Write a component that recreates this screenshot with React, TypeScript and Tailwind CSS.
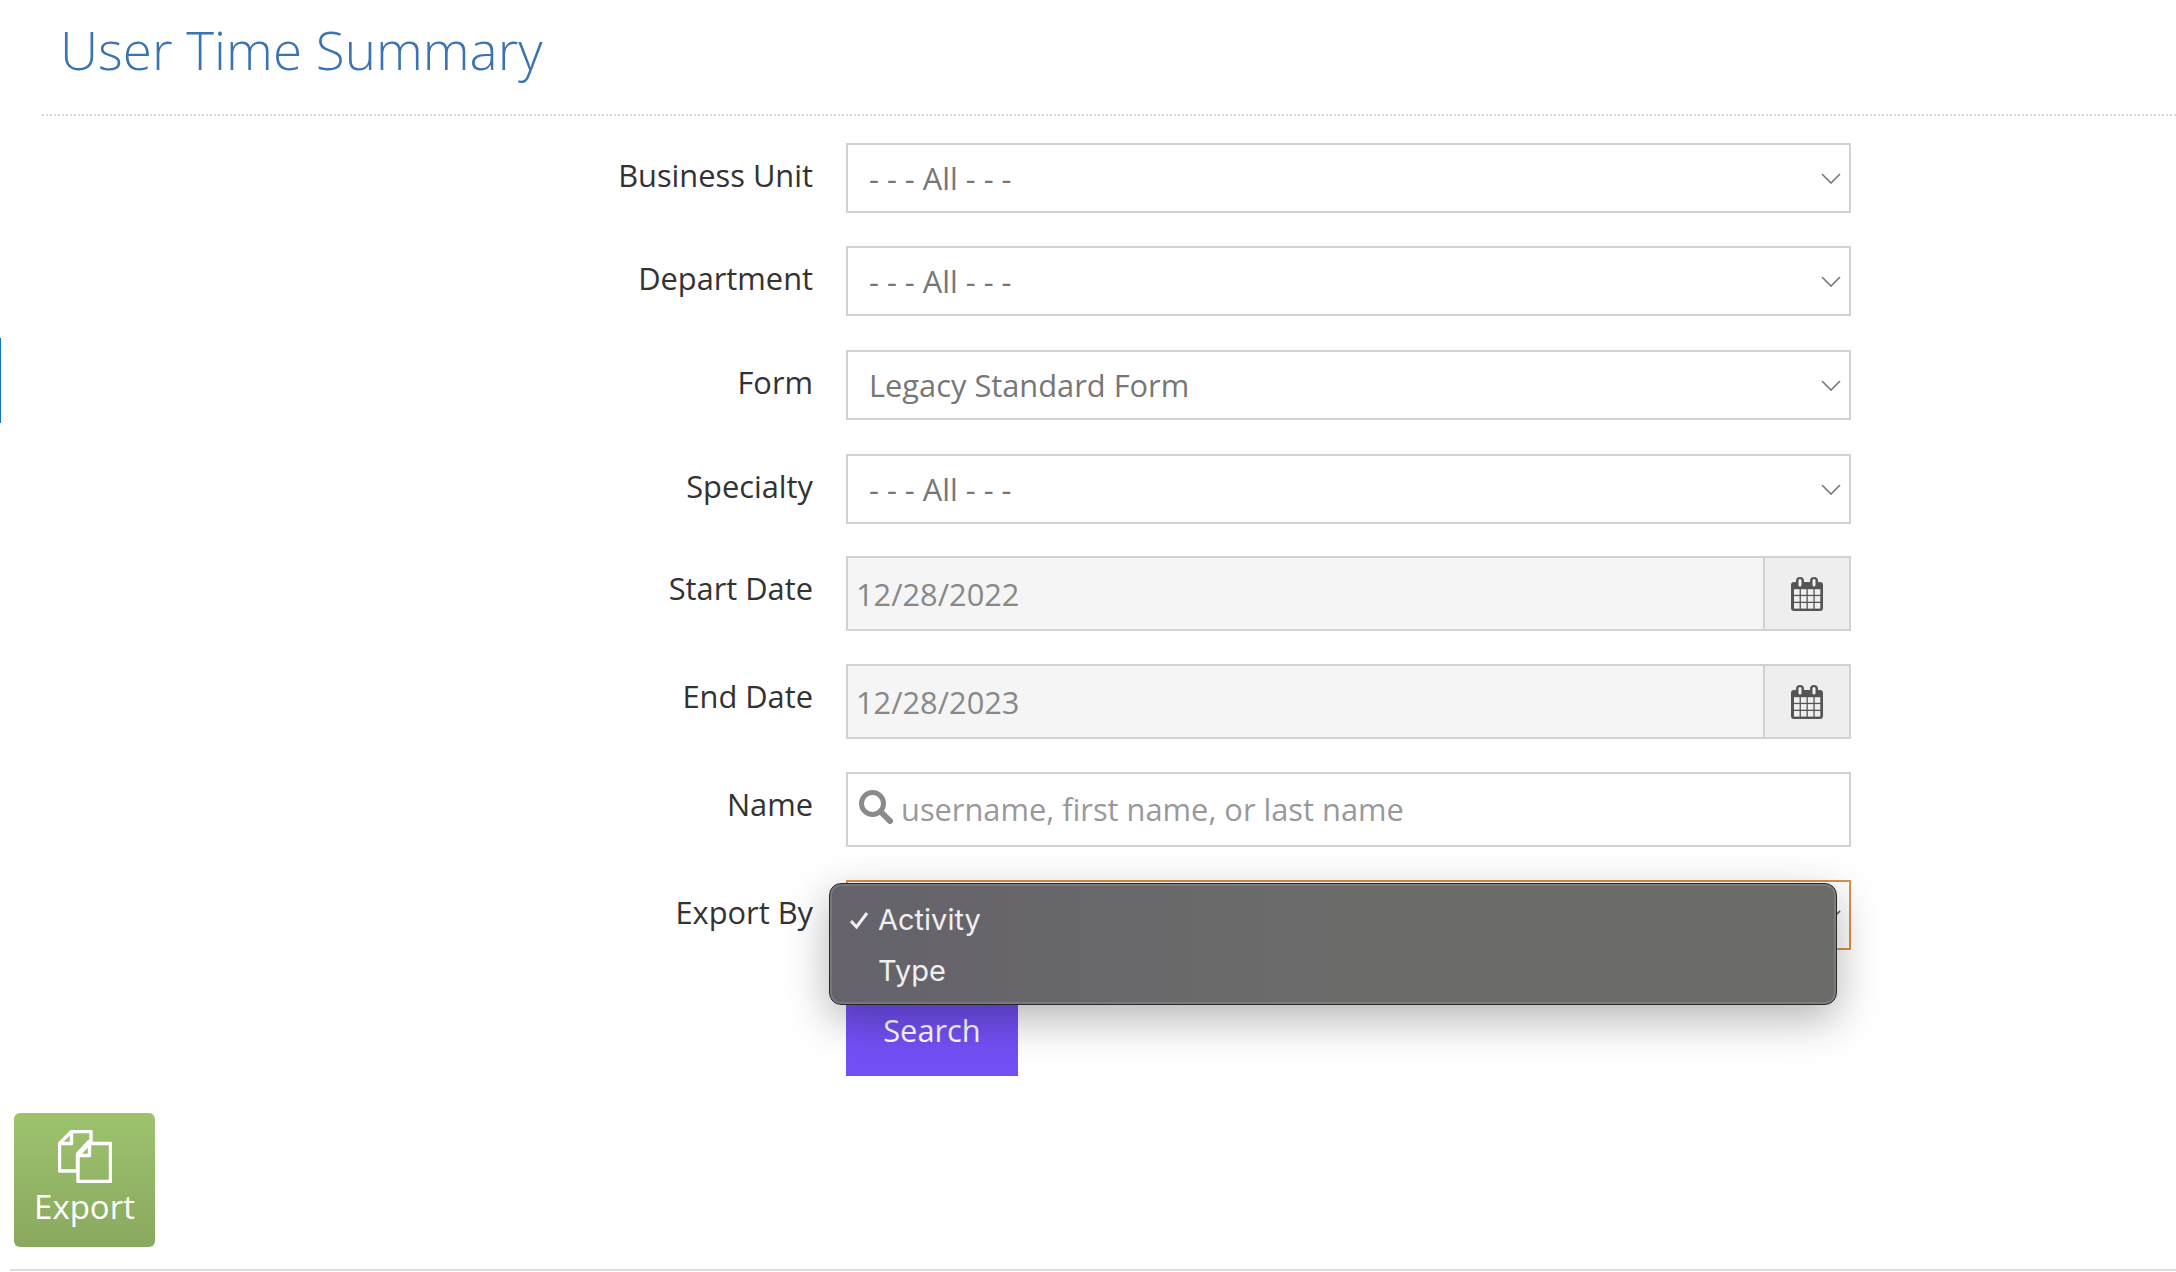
const sans = "font-['Open_Sans','Noto_Sans',sans-serif]";

function Chevron({ className = "text-[#777]" }: { className?: string }) {
  return (
    <svg width="20" height="11" viewBox="0 0 20 11" fill="none" className={"absolute right-[8px] top-[28px] " + className}>
      <path d="M1 1l9 9 9-9" stroke="currentColor" strokeWidth="1.6" />
    </svg>
  );
}

function CalendarIcon() {
  const cells = [];
  for (let r = 0; r < 3; r++) {
    for (let c = 0; c < 4; c++) {
      cells.push(<rect key={r + "-" + c} x={3 + c * 6.9} y={12.2 + r * 6.9} width="5.6" height="5.6" fill="#efefef" />);
    }
  }
  return (
    <svg width="32" height="34" viewBox="0 0 32 34">
      <rect x="0" y="5" width="32" height="29" rx="3" fill="#555" />
      <rect x="5" y="0" width="8" height="11" rx="4" fill="#555" />
      <rect x="19" y="0" width="8" height="11" rx="4" fill="#555" />
      <rect x="7.5" y="2" width="3" height="7.5" rx="1.5" fill="#f2f2f2" />
      <rect x="21.5" y="2" width="3" height="7.5" rx="1.5" fill="#f2f2f2" />
      {cells}
    </svg>
  );
}

function SelectRow({ label, value, mt }: { label: string; value: string; mt: string }) {
  return (
    <div className={"flex items-center " + mt}>
      <label className="w-[813px] pb-[6px] text-right text-[30.8px] leading-[40px] text-[#333]">{label}</label>
      <div className="relative ml-[33px] flex h-[70px] w-[1005px] items-center border-2 border-[#d2d2d2] bg-white pl-[21px] text-[30.8px] text-[#777]">
        {value}
        <Chevron />
      </div>
    </div>
  );
}

function DateRow({ label, value, mt }: { label: string; value: string; mt: string }) {
  return (
    <div className={"flex " + mt}>
      <label className="w-[813px] pt-[12px] text-right text-[30.8px] leading-[40px] text-[#333]">{label}</label>
      <div className="ml-[33px] flex h-[75px] w-[1005px] border-2 border-[#d2d2d2]">
        <div className="flex flex-1 items-center bg-[#f5f5f5] pl-[8px] pt-[2px] text-[30.8px] text-[#888]">{value}</div>
        <div className="flex w-[86px] items-center justify-center border-l-2 border-[#d2d2d2] bg-[#eeeeee]">
          <CalendarIcon />
        </div>
      </div>
    </div>
  );
}

export default function App() {
  return (
    <div className={"relative h-[1272px] w-[2176px] overflow-hidden bg-white " + sans}>
      <div className="absolute left-0 top-[338px] h-[85px] w-[1px] bg-[#1a73c8]" />
      <h1 className="pl-[60px] pt-[15px] text-[53px] font-light leading-[70px] text-[#3b74b0]">User Time Summary</h1>
      <div className="ml-[42px] mt-[29px] border-t-2 border-dotted border-[#d9d9d9]" />

      <div className="pt-[27px]">
        <SelectRow label="Business Unit" value="- - - All - - -" mt="" />
        <SelectRow label="Department" value="- - - All - - -" mt="mt-[33px]" />
        <SelectRow label="Form" value="Legacy Standard Form" mt="mt-[34px]" />
        <SelectRow label="Specialty" value="- - - All - - -" mt="mt-[34px]" />
        <DateRow label="Start Date" value="12/28/2022" mt="mt-[32px]" />
        <DateRow label="End Date" value="12/28/2023" mt="mt-[33px]" />

        <div className="mt-[33px] flex">
          <label className="w-[813px] pt-[12px] text-right text-[30.8px] leading-[40px] text-[#333]">Name</label>
          <div className="ml-[33px] flex h-[75px] w-[1005px] items-center border-2 border-[#d2d2d2] bg-white pl-[11px] text-[30.8px] text-[#999]">
            <svg width="34" height="34" viewBox="0 0 34 34" fill="none" className="mb-[6px] mr-[8px] shrink-0">
              <circle cx="13.5" cy="13.5" r="11" stroke="#8a8a8a" strokeWidth="5" />
              <path d="M21.5 21.5L31 31" stroke="#8a8a8a" strokeWidth="6" strokeLinecap="round" />
            </svg>
            username, first name, or last name
          </div>
        </div>

        <div className="relative mt-[33px] flex">
          <label className="w-[813px] pt-[12px] text-right text-[30.8px] leading-[40px] text-[#333]">Export By</label>
          <div className="relative ml-[33px] h-[70px] w-[1005px] border-2 border-[#dd9147] bg-white">
            <Chevron className="text-[#555]" />
          </div>
          <div className="absolute left-[829px] top-[3px] z-10 flex h-[122px] w-[1008px] flex-col rounded-[12px] border border-[#2a2a2a] bg-gradient-to-r from-[#65626b] from-0% via-[#6b6c6a] via-50% to-[#6b6c6a] pl-[19px] pt-[10px] font-['Inter',sans-serif] text-[29px] leading-[51px] text-[#f0f0f0] shadow-[inset_0_0_0_2px_rgba(255,255,255,0.12),0_14px_44px_rgba(0,0,0,0.3)]">
            <div className="flex items-center">
              <svg width="20" height="18" viewBox="0 0 20 18" fill="none" className="mr-[9px]">
                <path d="M2 10l5.5 6L18 2" stroke="#f0f0f0" strokeWidth="3" />
              </svg>
              Activity
            </div>
            <div className="pl-[29px]">Type</div>
          </div>
        </div>

        <div className="ml-[846px] mt-[34px] flex h-[92px] w-[172px] items-center justify-center bg-[#7350f5] text-[30.8px] text-white">
          Search
        </div>
      </div>

      <div className="ml-[14px] mt-[37px] flex h-[134px] w-[141px] flex-col items-center rounded-[6px] bg-gradient-to-b from-[#9dc36f] to-[#8aa85e] pt-[17px] text-[33px] leading-[40px] text-white">
        <svg width="54" height="53" viewBox="0 0 54 53" fill="none" stroke="#fff" strokeWidth="3.4" strokeLinejoin="round">
          <path d="M1.5 13.5L13.5 1.5H33v10H31L19.5 24v17h-18z" />
          <path d="M13.5 2v11.5H1.5" />
          <path d="M31.5 13.5H52.5V51.5H20V25.5z" />
          <path d="M31.5 14v11.5H20" />
        </svg>
        <span className="mt-[4px]">Export</span>
      </div>

      <div className="ml-[10px] mt-[22px] border-t-2 border-[#dedede]" />
    </div>
  );
}
